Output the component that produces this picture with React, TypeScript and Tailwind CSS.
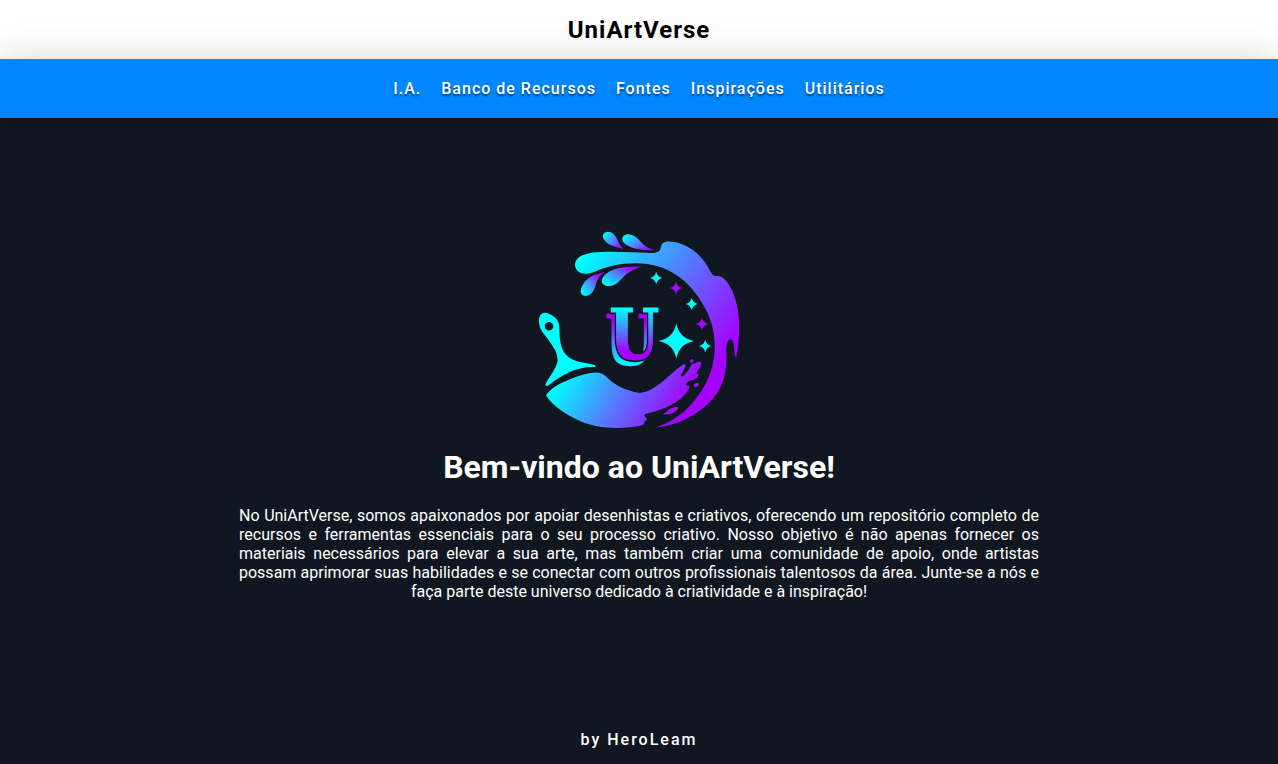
const links = ["I.A.", "Banco de Recursos", "Fontes", "Inspirações", "Utilitários"];

const smallStars = [
  { x: 656.2, y: 278, fill: "#00ffff" },
  { x: 676, y: 288, fill: "#a40cff" },
  { x: 691.7, y: 304, fill: "#00ffff" },
  { x: 702, y: 324, fill: "#a40cff" },
  { x: 705.2, y: 346, fill: "#00ffff" },
];

function Logo() {
  return (
    <svg viewBox="539 231 200 200" className="block size-[200px]" role="img" aria-label="UniArtVerse">
      <defs>
        <linearGradient id="wave" gradientUnits="userSpaceOnUse" x1="588" y1="248" x2="730" y2="349">
          <stop offset="0" stopColor="#00ffff" />
          <stop offset="0.5" stopColor="#517fff" />
          <stop offset="1" stopColor="#a600ff" />
        </linearGradient>
        <linearGradient id="paint" gradientUnits="userSpaceOnUse" x1="555" y1="384" x2="656" y2="444">
          <stop offset="0" stopColor="#00ffff" />
          <stop offset="0.5" stopColor="#517fff" />
          <stop offset="1" stopColor="#a208ff" />
        </linearGradient>
        <linearGradient id="drop" x1="0" y1="0.2" x2="1" y2="0.9">
          <stop offset="0" stopColor="#00ffff" />
          <stop offset="0.5" stopColor="#517fff" />
          <stop offset="0.9" stopColor="#a600ff" />
        </linearGradient>
        <linearGradient id="dropUp" x1="0" y1="0.8" x2="0.9" y2="0.1">
          <stop offset="0" stopColor="#00ffff" />
          <stop offset="0.5" stopColor="#517fff" />
          <stop offset="0.9" stopColor="#a600ff" />
        </linearGradient>
        <linearGradient id="front" gradientUnits="userSpaceOnUse" x1="0" y1="-50" x2="0" y2="-8">
          <stop offset="0" stopColor="#00ffff" />
          <stop offset="0.5" stopColor="#4c84ff" />
          <stop offset="1" stopColor="#a600ff" />
        </linearGradient>
        <linearGradient id="back" gradientUnits="userSpaceOnUse" x1="0" y1="-42" x2="0" y2="0">
          <stop offset="0" stopColor="#a600ff" />
          <stop offset="0.5" stopColor="#4c84ff" />
          <stop offset="1" stopColor="#00ffff" />
        </linearGradient>
        <text id="initial" fontFamily='"DejaVu Serif", serif' fontWeight="700" fontSize="70" textAnchor="middle">
          U
        </text>
      </defs>

      <path fill="url(#drop)" d="M608 231.7C603.5 231.7 601.5 236 604 239.6C607 245 614 246.4 623.5 249.2C619.5 245 618.6 242 616.2 237.6C614.3 234 611.5 231.7 608 231.7Z" />
      <path fill="url(#drop)" d="M628.3 234.3C623.5 234 620.9 238.5 623 241.7C628 248 640 250.5 655 250.4C645 248 641.5 242.5 637.7 238.6C635 235.9 631.8 234.5 628.3 234.3Z" />
      <path fill="url(#wave)" d="M575 265C575.2 257 583 254 593 252.4C608 250.8 632 252.2 650 252.9C656 253.2 660 252 660.7 248C661 243.5 664 241.4 669 241.5C689 242.5 703 256 711.3 273C713 276.5 715.5 275.7 718.5 276C725 276.5 729 285 732.5 291C738 305 740.4 321 738.9 336C738.6 345 737.5 350 736.2 357C734 357 734.9 348 733.2 342.2C731.7 338 728 338 727 344C725.5 349 727 356 726 366C725 381 718 396 704.5 407C690 419 673 426 655.5 427.5C679 420 695 404 706.5 382C719 356 716.5 329 705 308C690 280 667 263 635 263.3C620 263.4 606 266.5 596 271.3C586 276 575.5 274 575 265Z" />
      <path fill="url(#dropUp)" d="M604.5 272.1C590 275 583 281 580.8 290C580 294 583 296 586.3 295.8C591 295.3 593.5 291.4 595 287C598 278 600 275.5 604.5 272.1Z" />
      <path fill="url(#dropUp)" d="M641.5 266.6C619 266 606 270 602.1 279C600.8 284 605 286.7 610 286C617.5 285 620 280 625 275.5C630 271 635 269 641.5 266.6Z" />

      <path fill="#00ffff" fillRule="evenodd" d="M544.7 312.8C550 313.3 557 317.2 558.8 323.5C560 330 558.8 337 560.8 344C562.5 354 570 360 580 362C586 363.2 591 363.8 594.6 365.1C596 366 595.5 367 593.8 367.1C576 366.7 562 375 549 384.9C546 387 544.6 385.7 546 382.9C550 376 555.5 369.5 557.4 362C558.5 354 553.5 347 548.5 340C543 333 539.2 328.5 538.9 321.5C539 316 541 313 544.7 312.8ZM549 322A4.3 4.3 0 1 0 549 330.6A4.3 4.3 0 1 0 549 322Z" />
      <path fill="url(#paint)" d="M547.2 393.6C553 386 570 378.3 584 374.6C593 372.1 600.3 371 605 375.6C614 385 625 390.8 640 393C655 391 668 376 682.1 364.9C684.2 363.4 686.4 364.2 685.5 366.3C684.4 370 681.6 372.2 681.2 375.4C681 377.3 683 376.6 684.2 375C687.5 371.8 690 368 691 365.5C692.5 362 694.4 364.5 696.2 362.9C699.6 360.6 702.3 362.3 701 365.4C700.2 368.5 697.1 370 696.6 372.7C696.4 374.3 699 373.3 698.5 375.4C696 380 691 379.6 687.4 382C685 384.1 686.1 386.6 688.4 385.7C690.3 385.2 689.5 388 688.2 389.8C682.5 400 669 407.5 654 411.7C649.3 413.3 644 413.2 644.4 415.8C644.6 417.8 647.7 417.6 646.7 419.6C646.2 421 643.9 421.2 644.3 423C644.4 425.5 637 426.3 632 427.1C613 429.2 594 427.5 580 421C564 413.5 554 406 548 398.2C546.2 395.7 545.8 395.4 547.2 393.6Z" />
      <path fill="#a40cff" d="M690.1 361.4C689.7 359.5 692.2 358.3 693.3 359.7C693.9 361.1 692.8 362.3 691.5 362.6C690.5 362.8 690.2 362.2 690.1 361.4ZM694 386.2C693.3 384.2 695.8 382.7 697.6 383.1C699.3 383.3 699.2 385.5 697.8 386.2C696.3 387.1 694.7 387.6 694 386.2ZM663 413.7C666.5 413 668 409.3 671.5 408.2C674 407.3 677.3 405.8 678.1 407.7C678.2 410 675 411.5 673.2 412.7C669.5 414.5 665.5 414.8 663 413.7Z" />

      <g transform="translate(629.4 364.5) scale(0.82 1)">
        <use href="#initial" fill="url(#back)" stroke="url(#back)" strokeWidth="0.4" strokeLinejoin="round" />
      </g>
      <g transform="translate(634.3 359) scale(0.82 1)">
        <use href="#initial" fill="#101720" stroke="#101720" strokeWidth="4.4" strokeLinejoin="round" />
        <use href="#initial" fill="url(#front)" stroke="url(#front)" strokeWidth="1" strokeLinejoin="round" />
      </g>

      <path fill="#00ffff" d="M676.3 323.3Q679.1 338.2 694 341Q679.1 343.8 676.3 358.7Q673.5 343.8 658.6 341Q673.5 338.2 676.3 323.3Z" />
      {smallStars.map((star) => (
        <path key={star.y} fill={star.fill} transform={`translate(${star.x} ${star.y})`} d="M0-6.3Q1.1-1.1 6.3 0Q1.1 1.1 0 6.3Q-1.1 1.1-6.3 0Q-1.1-1.1 0-6.3Z" />
      ))}
    </svg>
  );
}

export default function App() {
  return (
    <div className="flex h-screen flex-col overflow-hidden bg-[#101720] font-['Roboto',sans-serif] text-white">
      <header className="flex h-[59px] shrink-0 items-center justify-center bg-white text-black">
        <h1 className="text-2xl leading-7 font-bold tracking-[1px]">UniArtVerse</h1>
      </header>
      <nav className="relative flex h-[59px] shrink-0 items-center justify-center gap-5 bg-[#0087ff] shadow-[0_0_40px_rgba(0,0,0,0.16)]">
        {links.map((label) => (
          <a key={label} href="#" className="text-base leading-[19px] font-medium tracking-[1px] [text-shadow:0_2px_2px_rgba(0,0,0,0.5)]">
            {label}
          </a>
        ))}
      </nav>
      <main className="flex flex-1 flex-col items-center pt-[113px]">
        <Logo />
        <h2 className="mt-[17px] text-[32px] leading-[38px] font-bold">Bem-vindo ao UniArtVerse!</h2>
        <p className="mt-5 w-[800px] text-justify text-base leading-[19px] [text-align-last:center]">
          No UniArtVerse, somos apaixonados por apoiar desenhistas e criativos, oferecendo um repositório completo de
          recursos e ferramentas essenciais para o seu processo criativo. Nosso objetivo é não apenas fornecer os
          materiais necessários para elevar a sua arte, mas também criar uma comunidade de apoio, onde artistas possam
          aprimorar suas habilidades e se conectar com outros profissionais talentosos da área. Junte-se a nós e faça
          parte deste universo dedicado à criatividade e à inspiração!
        </p>
      </main>
      <footer className="flex h-[49px] shrink-0 items-center justify-center">
        <span className="text-base leading-[19px] font-medium tracking-[2px]">by HeroLeam</span>
      </footer>
    </div>
  );
}
